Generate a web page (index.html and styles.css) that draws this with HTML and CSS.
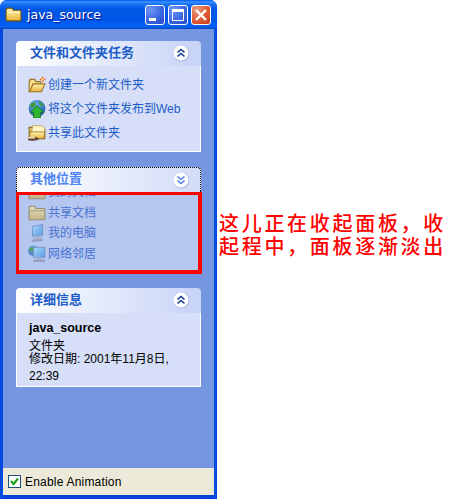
FILE: index.html
```html
<!DOCTYPE html>
<html lang="zh-CN">
<head>
    <meta charset="UTF-8">
    <title>java_source</title>
    <link rel="stylesheet" href="styles.css">
</head>
<body>

    <svg class="defs" width="0" height="0">
        <defs>
            <linearGradient id="folderFace" x1="0" y1="0" x2="0" y2="1">
                <stop offset="0" stop-color="#fff2b0"/>
                <stop offset="1" stop-color="#e8b53e"/>
            </linearGradient>
            <linearGradient id="tanFace" x1="0" y1="0" x2="0" y2="1">
                <stop offset="0" stop-color="#f3e6b8"/>
                <stop offset="1" stop-color="#c9ae6e"/>
            </linearGradient>
            <linearGradient id="screen" x1="0" y1="0" x2="1" y2="1">
                <stop offset="0" stop-color="#a9dcfb"/>
                <stop offset="1" stop-color="#3f8fe6"/>
            </linearGradient>
            <radialGradient id="globe" cx="0.4" cy="0.3" r="0.8">
                <stop offset="0" stop-color="#6db4f5"/>
                <stop offset="1" stop-color="#1a4fa8"/>
            </radialGradient>
        </defs>
    </svg>

    <div class="window">
        <div class="titlebar">
            <svg class="title-icon" width="17" height="15" viewBox="0 0 16 14">
                <path d="M1 3 L1 12 Q1 13 2 13 L14 13 Q15 13 15 12 L15 4 Q15 3 14 3 L8 3 L6.5 1 L2.5 1 Q1 1 1 3 Z" fill="url(#folderFace)" stroke="#7a5608"/>
                <path d="M2 5 L14 5" stroke="#fff8d0"/>
            </svg>
            <span class="title-text">java_source</span>
            <div class="title-buttons">
                <div class="tbtn">
                    <svg width="20" height="20" viewBox="0 0 20 20"><rect x="4" y="13" width="7" height="3" fill="#fff"/></svg>
                </div>
                <div class="tbtn">
                    <svg width="20" height="20" viewBox="0 0 20 20"><rect x="4.5" y="4.5" width="11" height="11" fill="none" stroke="#fff"/><rect x="4" y="4" width="12" height="3" fill="#fff"/></svg>
                </div>
                <div class="tbtn close">
                    <svg width="20" height="20" viewBox="0 0 20 20"><path d="M5 5 L15 15 M15 5 L5 15" stroke="#fff" stroke-width="2.4" fill="none"/></svg>
                </div>
            </div>
        </div>

        <div class="content">
            <!-- tasks -->
            <section class="panel">
                <div class="panel-head">
                    <span>文件和文件夹任务</span>
                    <svg class="chevron" width="18" height="18" viewBox="0 0 18 18">
                        <circle cx="9.5" cy="9.5" r="8" fill="#aab8e0"/>
                        <circle cx="9" cy="9" r="7.5" fill="#fff"/>
                        <path d="M5.5 8.5 L9 5.5 L12.5 8.5 M5.5 12.5 L9 9.5 L12.5 12.5" fill="none" stroke="#12398f" stroke-width="1.6"/>
                    </svg>
                </div>
                <div class="panel-body tasks">
                    <div class="row">
                        <svg class="icon" width="18" height="18" viewBox="1 1 16 16">
                            <path d="M2 6 L3 4 L7 4 L8 6 L12 6 L12 9 L3 15 L2 15 Z" fill="#f6dc8c" stroke="#9a7420"/>
                            <path d="M5.5 8 L16 8 L13 15 L2.5 15 Z" fill="url(#folderFace)" stroke="#9a7420"/>
                            <path d="M14 1 L15 3 L17 4 L15 5 L14 7 L13 5 L11 4 L13 3 Z" fill="#f2692a"/>
                            <circle cx="14" cy="4" r="1" fill="#ffe98a"/>
                        </svg>
                        <span>创建一个新文件夹</span>
                    </div>
                    <div class="row">
                        <svg class="icon" width="18" height="18" viewBox="1 1 16 16">
                            <circle cx="9" cy="8.5" r="7.5" fill="url(#globe)"/>
                            <path d="M3 5 Q6 2 8 4 Q8 7 5 8 Q3 8 3 5 Z M10 2 Q14 3 15 7 L12 6 Z" fill="#3f9a3a"/>
                            <path d="M9 6 L15 12 L12 12 L12 17 L6 17 L6 12 L3 12 Z" fill="#2fb52f" stroke="#0f6e1a" stroke-width="0.7"/>
                        </svg>
                        <span>将这个文件夹发布到Web</span>
                    </div>
                    <div class="row">
                        <svg class="icon" width="18" height="18" viewBox="1 1 16 16">
                            <path d="M2 4 L7 4 L8 6 L16 6 L16 14 L2 14 Z" fill="#e3c069" stroke="#8e6f24"/>
                            <path d="M5 2.5 L13 2.5 L16 5 L15 11 L4 11 Z" fill="#fff6c8" stroke="#b59a4a" stroke-width="0.7"/>
                            <path d="M3 8 L16 8 L15 14 L2 14 Z" fill="url(#folderFace)" stroke="#8e6f24" stroke-width="0.7"/>
                            <path d="M1 12.5 L9 12.5 L11 15 L5 16 L1 15.5 Z" fill="#6b4a3a"/>
                            <rect x="1" y="12.5" width="6" height="1.4" fill="#e8e2d0"/>
                        </svg>
                        <span>共享此文件夹</span>
                    </div>
                </div>
            </section>

            <!-- this one is caught mid collapse -->
            <section class="panel fading">
                <div class="panel-head focused">
                    <span>其他位置</span>
                    <svg class="chevron" width="18" height="18" viewBox="0 0 18 18">
                        <circle cx="9.5" cy="9.5" r="8" fill="#aab8e0"/>
                        <circle cx="9" cy="9" r="7.5" fill="#fff"/>
                        <path d="M5.5 5.5 L9 8.5 L12.5 5.5 M5.5 9.5 L9 12.5 L12.5 9.5" fill="none" stroke="#4f7fe0" stroke-width="1.6"/>
                    </svg>
                </div>
                <div class="panel-body places">
                    <div class="row first-clipped">
                        <svg class="icon" width="18" height="18" viewBox="1 1 16 16">
                            <path d="M2 3 L7 3 L8 5 L16 5 L16 15 L2 15 Z" fill="url(#tanFace)" stroke="#8d8256"/>
                        </svg>
                        <span>我的文档</span>
                    </div>
                    <div class="row">
                        <svg class="icon" width="18" height="18" viewBox="1 1 16 16">
                            <path d="M2 4 Q2 3 3 3 L7 3 L8 5 L15 5 Q16 5 16 6 L16 15 L2 15 Z" fill="url(#tanFace)" stroke="#8d8256"/>
                            <path d="M2.5 7 L15.5 7" stroke="#8d8256" stroke-width="0.7"/>
                        </svg>
                        <span>共享文档</span>
                    </div>
                    <div class="row">
                        <svg class="icon" width="18" height="18" viewBox="1 1 16 16">
                            <path d="M5 3 L14 1.5 L14 11 L5 12 Z" fill="url(#screen)" stroke="#6d85b5" stroke-width="0.8"/>
                            <path d="M6 12 L13 11 L13 14 L6 15 Z" fill="#a3aec8"/>
                            <path d="M4 15 L14 14 L14 16 L5 17 Z" fill="#8a94b8"/>
                        </svg>
                        <span>我的电脑</span>
                    </div>
                    <div class="row">
                        <svg class="icon" width="18" height="18" viewBox="1 1 16 16">
                            <circle cx="5.5" cy="6" r="4.5" fill="url(#globe)"/>
                            <path d="M2 4 Q4 2 6 3 L6 6 L3 7 Z" fill="#3f9a3a"/>
                            <rect x="6" y="3" width="10" height="9" fill="url(#screen)" stroke="#6d85b5" stroke-width="0.8"/>
                            <path d="M8 12 L14 12 L14 14 L8 14 Z" fill="#a3aec8"/>
                            <path d="M6 14 L16 14 L16 16 L6 16 Z" fill="#8a94b8"/>
                        </svg>
                        <span>网络邻居</span>
                    </div>
                </div>
            </section>

            <section class="panel">
                <div class="panel-head">
                    <span>详细信息</span>
                    <svg class="chevron" width="18" height="18" viewBox="0 0 18 18">
                        <circle cx="9.5" cy="9.5" r="8" fill="#aab8e0"/>
                        <circle cx="9" cy="9" r="7.5" fill="#fff"/>
                        <path d="M5.5 8.5 L9 5.5 L12.5 8.5 M5.5 12.5 L9 9.5 L12.5 12.5" fill="none" stroke="#12398f" stroke-width="1.6"/>
                    </svg>
                </div>
                <div class="panel-body details">
                    <div class="detail-name">java_source</div>
                    <div class="detail-type">文件夹</div>
                    <div class="detail-date">修改日期: 2001年11月8日,</div>
                    <div class="detail-time">22:39</div>
                </div>
            </section>
        </div>

        <div class="statusbar">
            <span class="checkbox">
                <svg width="11" height="11" viewBox="0 0 11 11"><path d="M2 5 L4.5 8 L9 2.5" fill="none" stroke="#21a121" stroke-width="2.2"/></svg>
            </span>
            <span>Enable Animation</span>
        </div>
    </div>

    <p class="note">这儿正在收起面板&#xFF0C;收<br>起程中&#xFF0C;面板逐渐淡出</p>

</body>
</html>
```

FILE: styles.css
```css
* {
    margin: 0;
    padding: 0;
    box-sizing: border-box;
}
body {
    display: flex;
    align-items: flex-start;
    width: 450px;
    height: 499px;
    overflow: hidden;
    background-color: #fff;
    font-family: "Liberation Sans", "Noto Sans CJK SC", sans-serif;
    font-size: 12px;
}
.defs {
    position: absolute;
}
.window {
    display: flex;
    flex-direction: column;
    flex: none;
    width: 217px;
    height: 499px;
    padding: 0 3px 4px;
    border-radius: 7px 7px 0 0;
    background: linear-gradient(to right, #0831d9, #0855dd 1px, #0046e0 3px) left top / 3px 100% no-repeat,
                linear-gradient(to left, #0831d9, #0855dd 1px, #0046e0 3px) right top / 3px 100% no-repeat,
                #0543d8;
}
.titlebar {
    display: flex;
    align-items: center;
    flex: none;
    height: 29px;
    margin: 0 -3px;
    padding: 0 6px 0 5px;
    border-radius: 7px 7px 0 0;
    background: linear-gradient(to bottom, #0058ee 0, #3a93ff 2px, #1a72f5 4px, #0058e6 9px, #0055e5 20px, #0062f7 25px, #0a5fe8 27px, #0046c8 29px);
}
.title-icon {
    flex: none;
}
.title-text {
    margin-left: 5px;
    color: #fff;
    font-family: "DejaVu Sans", sans-serif;
    font-size: 12.5px;
    text-shadow: 1px 1px 1px #0f1089;
}
.title-buttons {
    display: flex;
    gap: 3px;
    margin-left: auto;
}
.tbtn {
    width: 20px;
    height: 20px;
    border: 1px solid #fff;
    border-radius: 3px;
    overflow: hidden;
    background: radial-gradient(circle at 25% 20%, #6f95f2, #3c68e4 55%, #2246c4 100%);
}
.tbtn svg {
    display: block;
    margin: -1px;
}
.tbtn.close {
    background: radial-gradient(circle at 25% 20%, #eb9a7e, #e05c35 55%, #c33b1b 100%);
}
.content {
    flex: 1;
    padding: 12px 13px 0;
    background-color: #7596e1;
}
.panel {
    width: 185px;
    margin-bottom: 15px;
}
.panel.fading {
    margin-bottom: 14px;
}
.panel-head {
    display: flex;
    align-items: center;
    justify-content: space-between;
    height: 25px;
    padding: 0 11px 1px 14px;
    border-radius: 4px 4px 0 0;
    background: linear-gradient(to right, #fff, #c6d3f7);
    color: #215dc6;
    font-size: 13px;
    font-weight: bold;
}
.panel-head span {
    padding-bottom: 4px;
}
.panel-head.focused {
    padding: 0 10px 1px 13px;
    border: 1px dotted #000;
    border-bottom-style: none;
    background: linear-gradient(to right, #fff, #d3dcf7);
    color: #4e84f2;
}
.chevron {
    flex: none;
}
.panel-body {
    border: 1px solid #fff;
    border-top: none;
    background-color: #d6dff7;
}
.row {
    display: flex;
    align-items: center;
    gap: 2px;
    color: #215dc6;
}
.row span {
    padding-bottom: 3px;
}
.icon {
    flex: none;
}
.tasks {
    height: 86px;
    padding: 7px 0 0 11px;
}
.tasks .row {
    height: 24px;
}
.places {
    width: 186px;
    height: 82px;
    padding-left: 9px;
    border-width: 3px 4px 4px 3px;
    border-style: solid;
    border-color: #f00;
    background-color: #b5c7ef;
    overflow: hidden;
}
.places .row {
    height: 20.5px;
    color: #4a72d2;
}
.places .icon {
    opacity: 0.8;
}
.places .first-clipped {
    margin-top: -13px;
}
.details {
    height: 74px;
    padding: 8px 0 0 12px;
    color: #000;
}
.detail-name {
    height: 14px;
    font-weight: bold;
    font-size: 12.5px;
    line-height: 14px;
}
.detail-type {
    height: 13px;
    margin-top: 5px;
    line-height: 13px;
}
.detail-date {
    height: 13px;
    line-height: 13px;
}
.detail-time {
    height: 13px;
    margin-top: 4px;
    line-height: 13px;
}
.statusbar {
    display: flex;
    align-items: center;
    gap: 4px;
    flex: none;
    height: 27px;
    padding-left: 5px;
    background-color: #ece9d8;
    color: #000;
    letter-spacing: 0.2px;
}
.checkbox {
    display: flex;
    align-items: center;
    justify-content: center;
    width: 13px;
    height: 13px;
    border: 1px solid #1c5180;
    background-color: #fff;
}
.note {
    margin: 211px 0 0 2px;
    color: #f00;
    font-family: "Noto Sans CJK SC", sans-serif;
    font-size: 20px;
    font-weight: 500;
    line-height: 23px;
    letter-spacing: 2.7px;
    white-space: nowrap;
}
```
